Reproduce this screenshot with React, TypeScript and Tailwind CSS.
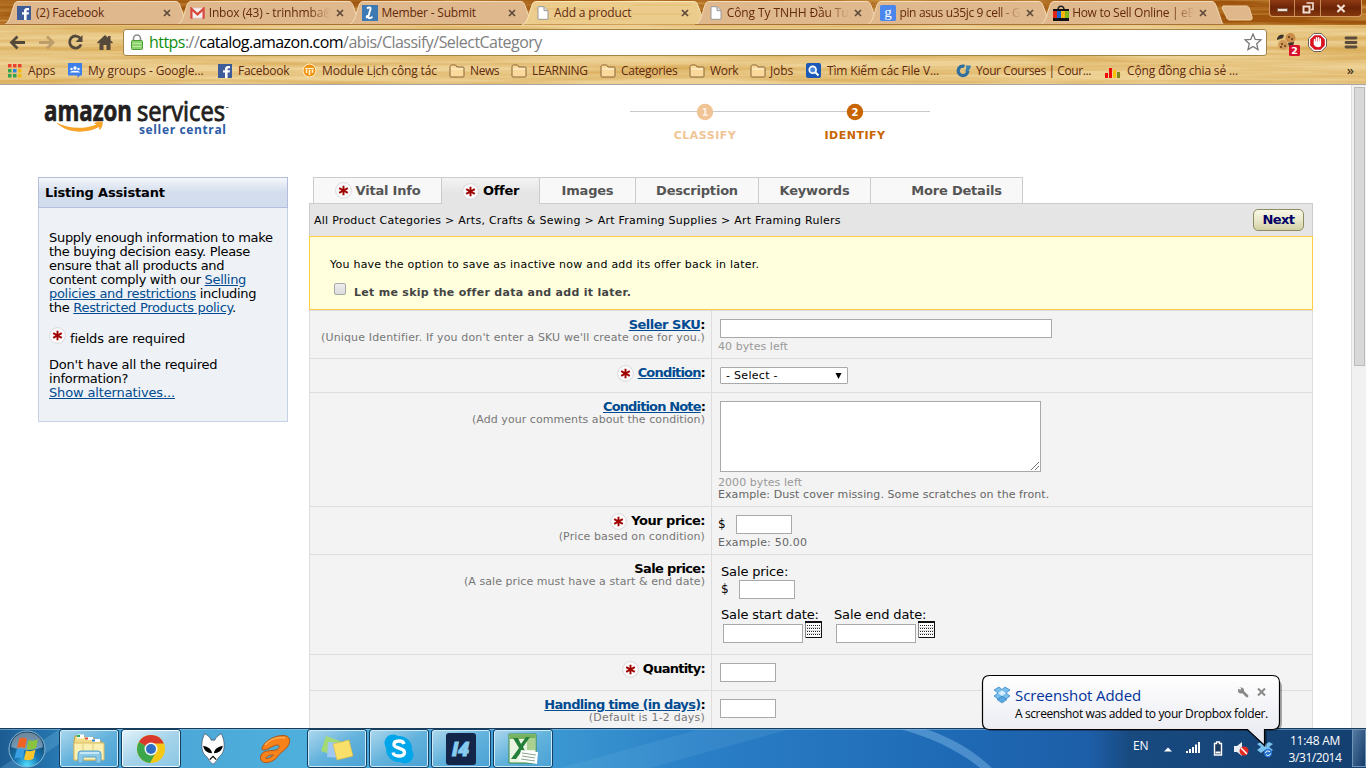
import type { ReactNode } from "react";

/* ---------- small shared pieces ---------- */

const UI = "font-['Open_Sans','Noto_Sans',sans-serif]";
const BODY = "font-['DejaVu_Sans',Verdana,sans-serif]";

function Star({ className = "" }: { className?: string }) {
  return (
    <svg viewBox="0 0 17 17" className={`h-[17px] w-[17px] shrink-0 ${className}`}>
      <circle cx="8.5" cy="8.5" r="7.9" fill="#fbfbfb" stroke="#d8d8d8" strokeWidth="1" />
      <path d="M8.5 3.700v9.600M4.200 6.100l8.600 4.800M12.800 6.100l-8.600 4.800" stroke="#a00000" strokeWidth="1.900" />
    </svg>
  );
}

function Wood({ id, className, freq, tone }: { id: string; className: string; freq: string; tone: string }) {
  return (
    <svg className={className} preserveAspectRatio="none">
      <filter id={id} x="0" y="0" width="100%" height="100%" colorInterpolationFilters="sRGB">
        <feTurbulence type="fractalNoise" baseFrequency={freq} numOctaves="4" seed="7" />
        <feColorMatrix values={tone} />
      </filter>
      <rect width="100%" height="100%" filter={`url(#${id})`} />
    </svg>
  );
}

/* ---------- browser ---------- */

const fb = (
  <svg viewBox="0 0 14 14" className="h-[14px] w-[14px]">
    <rect width="14" height="14" fill="#3f5c9a" />
    <path d="M7 14V8.600H5V6.300h2V5c0-2 1.200-3 3-3h2v2.300h-1.400c-.8 0-1 .4-1 1v1H12l-.3 2.300H9.600V14z" fill="#fff" />
  </svg>
);
const gmail = (
  <svg viewBox="0 0 16 12" className="h-[12px] w-[15px]">
    <rect x=".5" y=".5" width="15" height="11" rx="1" fill="#f4f1f0" stroke="#d9a9a0" strokeWidth=".6" />
    <path d="M1.500 12V1.500L8 7.500l6.500-6V12" fill="none" stroke="#d8483d" strokeWidth="2.400" />
  </svg>
);
const lIcon = (
  <svg viewBox="0 0 16 16" className="h-[16px] w-[16px]">
    <rect width="16" height="16" fill="#3d79b3" />
    <path d="M5 3.500C6.500 2 9 2 8.500 4L6.500 11c-.5 2.200 1 2.800 2.500 1.800l1.500-1M6.500 11C4.500 10.500 4 12 5.500 13" fill="none" stroke="#fff" strokeWidth="1.900" />
  </svg>
);
const page = (
  <svg viewBox="0 0 12 14" className="mx-[2px] h-[14px] w-[12px]">
    <path d="M1 .7h6l4 4v8.600H1z" fill="#fff" stroke="#999" />
    <path d="M7 .7v4h4" fill="#ddd" stroke="#999" />
  </svg>
);
const google = (
  <svg viewBox="0 0 16 16" className="h-[16px] w-[16px]">
    <rect width="16" height="16" rx="1.500" fill="#4a86ec" />
    <text x="8" y="11.500" textAnchor="middle" fill="#fff" fontSize="15" fontFamily="Liberation Serif, serif">g</text>
  </svg>
);
const ebay = (
  <svg viewBox="0 0 16 16" className="h-[16px] w-[16px]">
    <path d="M5 5c0-5 6-5 6 0" fill="none" stroke="#222" strokeWidth="1.500" />
    <path d="M0 4h16v3H0zM0 13h16v3H0z" fill="#111" />
    <path d="M0 6h4v7H0z" fill="#e02418" />
    <path d="M4 6h4v7H4z" fill="#1c62d0" />
    <path d="M8 6h4v7H8z" fill="#f5b50c" />
    <path d="M12 6h4v7h-4z" fill="#84b71b" />
  </svg>
);

const tabs: { icon: ReactNode; label: string; fade?: boolean; active?: boolean; track: string }[] = [
  { icon: fb, label: "(2) Facebook", track: "tracking-[-0.2px]" },
  { icon: gmail, label: "Inbox (43) - trinhmba@", fade: true, track: "tracking-[-0.15px]" },
  { icon: lIcon, label: "Member - Submit", track: "tracking-[-0.2px]" },
  { icon: page, label: "Add a product", active: true, track: "tracking-[-0.15px]" },
  { icon: page, label: "Công Ty TNHH Đầu Tư", fade: true, track: "tracking-[-0.1px]" },
  { icon: google, label: "pin asus u35jc 9 cell - G", fade: true, track: "tracking-[-0.35px]" },
  { icon: ebay, label: "How to Sell Online | eB", fade: true, track: "tracking-[-0.3px]" },
];

function TabStrip() {
  return (
    <div className="relative flex h-[25px] pl-[4px]">
      <Wood id="dark" className="absolute inset-0 h-[25px] w-full" freq="0.006 0.16" tone="0 0 0 0 0.62  0 0 0 0 0.33  0 0 0 0 0.05  2.2 0 0 0 -0.5" />
      {tabs.map((t) => (
        <div key={t.label} className="relative flex h-[25px] w-[172.700px] shrink-0 items-center pl-[13px]">
          <svg viewBox="0 0 184 25" className="absolute left-0 top-0 h-[25px] w-[184px]">
            <path
              d="M0 24.500C5 24 6.500 16 9.500 6.500C11 2 12 1.500 15 1.500H171C174 1.500 175 2.500 176.500 7L180.500 18C182 23 183 24.500 184 24.500"
              fill={t.active ? "#ebcc8c" : "#e0b88d"}
              stroke={t.active ? "#f9e9bd" : "#f4dcb8"}
            />
            {!t.active && <path d="M0 24.500H184" stroke="#a87136" />}
            {t.active && <path d="M12 9h70M60 14h110M20 19h90M110 5h60" stroke="#d5a64c" opacity=".25" strokeWidth="1.500" />}
          </svg>
          <div className="relative flex h-[22px] w-[19px] items-center">{t.icon}</div>
          <div
            className={`relative h-[18px] w-[122px] overflow-hidden whitespace-nowrap text-[12px] leading-[18px] text-[#632a0c] ${t.track} ${
              t.fade ? "[mask-image:linear-gradient(to_right,#000_82%,transparent)]" : ""
            }`}
          >
            {t.label}
          </div>
          <svg viewBox="0 0 8 8" className="relative ml-[5px] h-[8px] w-[8px]">
            <path d="M1 1l6 6M7 1L1 7" stroke="#5e4a3c" strokeWidth="1.700" />
          </svg>
        </div>
      ))}
      <svg viewBox="0 0 32 16" className="relative ml-[8px] mt-[5px] h-[16px] w-[32px]">
        <path d="M2 1h23c2 0 3 1 3.500 3l2.500 8c.5 2 0 3-2 3H9c-2 0-3-1-3.500-3L1 3z" fill="#dfb78a" stroke="#efd0a0" />
      </svg>
      <div className="absolute right-[4px] top-0 flex h-[17px] w-[93px] overflow-hidden rounded-b-[4px] border border-t-0 border-[#d79c61] bg-gradient-to-b from-[#8e3b14] via-[#6c2406] to-[#85380f]">
        <div className="flex w-[25px] items-center justify-center border-r border-[#c48a58]">
          <div className="mt-[4px] h-[4px] w-[11px] border border-[#7d5a44] bg-[#f2dfd2]" />
        </div>
        <div className="flex w-[26px] items-center justify-center border-r border-[#c48a58]">
          <svg viewBox="0 0 12 12" className="h-[12px] w-[12px]">
            <path d="M4.500 1h6.500v6.500H9" fill="none" stroke="#f2dfd2" strokeWidth="1.600" />
            <path d="M1.500 4.500h6v6h-6z" fill="none" stroke="#f2dfd2" strokeWidth="2" />
          </svg>
        </div>
        <div className="flex flex-1 items-center justify-center">
          <svg viewBox="0 0 10 10" className="h-[9px] w-[10px]">
            <path d="M1 1l8 8M9 1L1 9" stroke="#f2dfd2" strokeWidth="2.400" />
          </svg>
        </div>
      </div>
    </div>
  );
}

function Toolbar() {
  return (
    <div className="relative flex h-[34px] items-center">
      <svg viewBox="0 0 123 34" className="h-[34px] w-[123px] shrink-0">
        <g fill="none" strokeWidth="2.800">
          <path d="M25 17.500H12M17.500 11.500l-6 6 6 6" stroke="#55493c" />
          <path d="M39 17.500H52M47 11.500l6 6-6 6" stroke="#bd9d69" />
          <path d="M80.500 13.500a6 6 0 1 0 .6 6" stroke="#55493c" />
        </g>
        <path d="M82.500 10v7H75.500z" fill="#55493c" />
        <path d="M97 17.500l8-7.500 3 2.800V11h2.500v4.200l2.500 2.300-1 1-1.500-1v7.500h-4v-5h-3v5h-4v-7.500l-1.500 1z" fill="#55493c" />
      </svg>
      <div className="flex h-[27px] w-[1144px] shrink-0 items-center rounded-[3px] border border-[#a58246] bg-white pl-[7px]">
        <svg viewBox="0 0 12 16" className="h-[16px] w-[12px]">
          <path d="M2.500 7V4.500a3.500 3.500 0 0 1 7 0V7" fill="none" stroke="#8b8b8b" strokeWidth="1.600" />
          <rect x=".5" y="6.500" width="11" height="9" rx="1" fill="#8cd36d" stroke="#4a9a35" />
          <path d="M1.500 9.500h9M1.500 12.500h9" stroke="#b9eaa2" />
        </svg>
        <div className="ml-[6px] w-[1100px] whitespace-nowrap text-[16px] leading-[22px] tracking-[-0.54px] text-[#808080]">
          <span className="text-[#0f8f0f]">https</span>://<span className="text-black">catalog.amazon.com</span>/abis/Classify/SelectCategory
        </div>
        <svg viewBox="0 0 18 18" className="-ml-[5px] h-[18px] w-[18px] shrink-0">
          <path d="M9 1l2.300 5.400 5.700.5-4.300 3.900 1.300 5.800L9 13.500l-5 3.100 1.300-5.800L1 6.900l5.700-.5z" fill="#fff" stroke="#777" strokeWidth="1.300" />
        </svg>
      </div>
      <svg viewBox="0 0 99 34" className="h-[34px] w-[99px] shrink-0">
        <circle cx="23.500" cy="13" r="5" fill="#c98d49" />
        <circle cx="16" cy="20" r="5" fill="#d19a58" />
        <path d="M10 15c0-4 3-6 7-5l-1 3zM27 17c0 3-2 5-5 5l-1-4z" fill="#3d342c" />
        <g fill="#5d3514"><circle cx="22" cy="12" r="1" /><circle cx="25" cy="14" r="1" /><circle cx="15" cy="19" r="1" /><circle cx="18" cy="21" r="1" /><circle cx="14" cy="22" r="1" /></g>
        <rect x="22" y="20" width="11" height="11" rx="1.500" fill="#d8102d" />
        <text x="27.500" y="29" textAnchor="middle" fontSize="9.500" fontWeight="700" fill="#fff" fontFamily="DejaVu Sans, sans-serif">2</text>
        <path d="M46.800 8.500h7.400l5.300 5.300v7.400l-5.300 5.300h-7.400l-5.300-5.300v-7.400z" fill="#fff" stroke="#6d6055" />
        <path d="M47.500 10.300h6l4.300 4.200v6l-4.300 4.200h-6l-4.300-4.200v-6z" fill="#d9101d" />
        <path d="M47.500 18v-3.500M49.500 17.500V12.800M51.500 17.500V12.800M53.300 18v-4" stroke="#fff" strokeWidth="1.500" strokeLinecap="round" />
        <path d="M46.800 16.500h7.300v3.500c0 3-6 3-7.300-.5z" fill="#fff" />
        <path d="M79 13h10M79 17.500h10M79 22h10" stroke="#5a4c3d" strokeWidth="2.800" strokeLinecap="round" />
      </svg>
    </div>
  );
}

const folder = (
  <svg viewBox="0 0 16 14" className="h-[14px] w-[16px]">
    <path d="M1 3c0-1 .5-2 1.500-2h4l1.500 2h6c.7 0 1 .5 1 1v8c0 .7-.3 1-1 1H2c-.7 0-1-.3-1-1z" fill="#fbd99a" stroke="#87653a" />
    <path d="M2 5h12" stroke="#fff3d6" />
  </svg>
);
const bookmarks: { icon: ReactNode; label: string; w: string; gap: string; track: string }[] = [
  {
    icon: (
      <svg viewBox="0 0 14 14" className="h-[14px] w-[14px]">
        <path d="M0 0h3.500v3.500H0zM5 0h3.500v3.500H5zM10 0h3.500v3.500H10z" fill="#e8432f" />
        <path d="M0 5h3.500v3.500H0z" fill="#30a34f" /><path d="M5 5h3.500v3.500H5z" fill="#2c82e0" /><path d="M10 5h3.500v3.500H10z" fill="#f2b90d" />
        <path d="M0 10h3.500v3.500H0zM5 10h3.500v3.500H5z" fill="#30a34f" /><path d="M10 10h3.500v3.500H10z" fill="#f2b90d" />
      </svg>
    ),
    label: "Apps", w: "w-[60px]", gap: "w-[20px]", track: "tracking-[-0.2px]",
  },
  {
    icon: (
      <svg viewBox="0 0 14 15" className="h-[15px] w-[14px]">
        <path d="M0 0h14v12.500h-2L9.500 15V12.500H0z" fill="#3f7fe8" />
        <circle cx="7" cy="5" r="1.700" fill="#fff" /><circle cx="3.500" cy="6" r="1.200" fill="#fff" /><circle cx="10.500" cy="6" r="1.200" fill="#fff" />
        <path d="M2 9.500c0-2.500 10-2.500 10 0z" fill="#fff" />
      </svg>
    ),
    label: "My groups - Google...", w: "w-[150px]", gap: "w-[20px]", track: "tracking-[-0.12px]",
  },
  { icon: fb, label: "Facebook", w: "w-[84px]", gap: "w-[20px]", track: "tracking-[-0.27px]" },
  {
    icon: (
      <svg viewBox="0 0 15 15" className="h-[15px] w-[15px]">
        <circle cx="7.500" cy="7.500" r="6.500" fill="#f29112" stroke="#fff0c8" />
        <path d="M3 5.500h9" stroke="#fff2c9" strokeWidth="1.200" /><path d="M4.500 6.500V10M7.500 6.500V12M10.500 6.500V10" stroke="#fff2c9" strokeWidth="1.600" />
      </svg>
    ),
    label: "Module Lịch công tác", w: "w-[147px]", gap: "w-[20px]", track: "tracking-[-0.15px]",
  },
  { icon: folder, label: "News", w: "w-[62px]", gap: "w-[21px]", track: "tracking-[-0.4px]" },
  { icon: folder, label: "LEARNING", w: "w-[89px]", gap: "w-[21px]", track: "tracking-[-0.3px]" },
  { icon: folder, label: "Categories", w: "w-[89px]", gap: "w-[21px]", track: "tracking-[-0.3px]" },
  { icon: folder, label: "Work", w: "w-[61px]", gap: "w-[21px]", track: "tracking-[-0.3px]" },
  { icon: folder, label: "Jobs", w: "w-[56px]", gap: "w-[20px]", track: "tracking-[-0.1px]" },
  {
    icon: (
      <svg viewBox="0 0 15 15" className="h-[15px] w-[15px]">
        <rect width="15" height="15" rx="2" fill="#1c58b5" />
        <circle cx="6.700" cy="6.700" r="3.400" fill="#4b86d8" stroke="#fff" strokeWidth="1.700" /><path d="M9.500 9.500l3 3" stroke="#fff" strokeWidth="2" />
      </svg>
    ),
    label: "Tìm Kiếm các File V...", w: "w-[149px]", gap: "w-[21px]", track: "tracking-[-0.15px]",
  },
  {
    icon: (
      <svg viewBox="0 0 16 14" className="h-[14px] w-[16px]">
        <path d="M9.500 2.300A4.800 4.800 0 1 0 12.800 6.500" fill="none" stroke="#2e6f9e" strokeWidth="3.200" /><path d="M10.500 1.500h5.300c.3 3-2 6-6.300 6 1.500-1.500 2.500-3.500 1-6z" fill="#3c82b0" />
      </svg>
    ),
    label: "Your Courses | Cour...", w: "w-[150px]", gap: "w-[21px]", track: "tracking-[-0.4px]",
  },
  {
    icon: (
      <svg viewBox="0 0 15 14" className="h-[14px] w-[15px]">
        <path d="M0 9h3v5H0zM4 4h3v10H4z" fill="#f00b0b" /><path d="M8 6h3v8H8z" fill="#fbc009" /><path d="M12 8h3v6h-3z" fill="#7d8a17" />
      </svg>
    ),
    label: "Cộng đồng chia sẻ ...", w: "w-[150px]", gap: "w-[22px]", track: "tracking-[-0.16px]",
  },
];

function BookmarkBar() {
  return (
    <div className="relative flex h-[25px] items-center pb-[2px] pl-[8px] text-[12px] leading-[16px] text-[#5f2a0e]">
      {bookmarks.map((b) => (
        <div key={b.label} className={`flex shrink-0 items-center ${b.w}`}>
          <div className={`shrink-0 ${b.gap}`}>{b.icon}</div>
          <span className={`whitespace-nowrap ${b.track}`}>{b.label}</span>
        </div>
      ))}
      <span className="ml-auto mr-[12px] pb-[2px] text-[13px] font-semibold text-[#4a3524]">»</span>
    </div>
  );
}

function Browser() {
  return (
    <header className={`relative h-[85px] shrink-0 overflow-hidden border-b border-[#a5a5a5] bg-[#c98d3e] ${UI}`}>
      <div className="absolute inset-x-0 top-[25px] h-[60px] bg-[#edd195]" />
      <Wood id="grain" className="absolute inset-0 h-[85px] w-full" freq="0.004 0.15" tone="0 0 0 0 0.85  0 0 0 0 0.67  0 0 0 0 0.34  2.2 0 0 0 -0.8" />
      <TabStrip />
      <Toolbar />
      <BookmarkBar />
    </header>
  );
}

/* ---------- page ---------- */

function PageHeader() {
  return (
    <div className="flex h-[92px] pl-[40px]">
      <svg viewBox="0 0 200 60" className="h-[60px] w-[200px]">
        <g fontFamily="Open Sans, sans-serif" fill="#231f20" stroke="#231f20">
          <text x="4" y="35.500" fontSize="28" fontWeight="700" textLength="88" lengthAdjust="spacingAndGlyphs" strokeWidth=".7">amazon</text>
          <text x="97" y="35.500" fontSize="28" textLength="88" lengthAdjust="spacingAndGlyphs" strokeWidth=".9">services</text>
        </g>
        <path d="M186 22.500h2.500" stroke="#555" />
        <path d="M16 37.500c13 6.500 28 7 40.500 2L54 38.500c2.500-2.500 6-2.500 8.800-1.500 0 3.500-1 6-3.200 8.300l-.6-3.300C46 49 27 48.500 16 37.500z" fill="#f7a428" />
        <text x="99" y="49" fontFamily="Open Sans, sans-serif" fontSize="12" fontWeight="700" fill="#2d5ca6" textLength="87">seller central</text>
      </svg>
      <div className="ml-[390px] mt-[18px] flex w-[300px] flex-col">
        <svg viewBox="0 0 300 18" className="h-[18px] w-[300px]">
          <path d="M0 8.500h300" stroke="#c9c9c9" />
          <circle cx="75" cy="9" r="8.200" fill="#f1c496" />
          <circle cx="225" cy="9" r="8.200" fill="#c96500" />
          <g fontFamily="DejaVu Sans, sans-serif" fontSize="10" fontWeight="700" fill="#fff" textAnchor="middle">
            <text x="75" y="12.500" opacity=".75">1</text>
            <text x="225" y="12.500">2</text>
          </g>
        </svg>
        <div className="mt-[8px] flex text-center text-[11px] font-bold leading-[14px] tracking-[0.5px]">
          <span className="w-[150px] text-[#f1c496]">CLASSIFY</span>
          <span className="w-[150px] text-[#c96500]">IDENTIFY</span>
        </div>
      </div>
    </div>
  );
}

function Link({ children }: { children: ReactNode }) {
  return <a className="text-[#004b91] underline underline-offset-1">{children}</a>;
}

function Sidebar() {
  return (
    <aside className="h-[245px] w-[250px] shrink-0">
      <div className="h-[31px] border border-[#b4bddb] bg-gradient-to-b from-[#f5f7fa] via-[#d3dded] to-[#d1dcec] pl-[6px] text-[13px] font-bold leading-[29px] tracking-[-0.15px]">
        Listing Assistant
      </div>
      <div className="h-[214px] border border-t-0 border-[#c6d1e6] bg-[#eef2f7] pl-[10px] pt-[23px] text-[13px] leading-[14px] tracking-[-0.3px]">
        <p className="whitespace-nowrap">
          Supply enough information to make<br />the buying decision easy. Please<br />ensure that all products and<br />content comply with our <Link>Selling</Link><br />
          <Link>policies and restrictions</Link> including<br />the <Link>Restricted Products policy</Link>.
        </p>
        <p className="mt-[14px] flex h-[18px] items-center tracking-[-0.18px]"><Star className="-mt-[6px]" /><span className="ml-[4px] pt-[2px]">fields are required</span></p>
        <p className="mt-[11px] tracking-[-0.22px]">Don't have all the required<br />information?<br /><span className="tracking-[-0.14px]"><Link>Show alternatives...</Link></span></p>
      </div>
    </aside>
  );
}

const stepTabs = [
  { label: "Vital Info", w: "w-[129px]", star: true },
  { label: "Offer", w: "w-[97px]", star: true, active: true },
  { label: "Images", w: "w-[96px]" },
  { label: "Description", w: "w-[123px]" },
  { label: "Keywords", w: "w-[112px]" },
  { label: "More Details", w: "w-[153px]", pad: true },
];

function Box({ className }: { className: string }) {
  return <div className={`border border-[#a9a9a9] bg-white ${className}`} />;
}

function Calendar() {
  return (
    <svg viewBox="0 0 17 17" className="h-[17px] w-[17px]" shapeRendering="crispEdges">
      <rect x="0" y="0" width="17" height="17" fill="#888" />
      <rect x="1" y="1" width="15" height="15" fill="#fff" />
      <path d="M0 0h17v2H0zM16 0h1v17h-1zM1 16h16v1H1z" fill="#111" />
      <path d="M2 4.500h13M2 7.500h13M2 10.500h13M2 13.500h13" stroke="#222" strokeDasharray="1 1" />
      <path d="M1 6.500h15M1 9.500h15M1 12.500h15" stroke="#ddd" />
    </svg>
  );
}

function Row({
  h, label, track, link, star, note, noteCls = "tracking-[0.06px]", children,
}: { h: string; label: string; track: string; link?: boolean; star?: boolean; note?: string; noteCls?: string; children: ReactNode }) {
  return (
    <div className={`flex shrink-0 border-t border-[#ddd] ${h}`}>
      <div className="w-[401px] shrink-0 pr-[6px] pt-[7px] text-right">
        <div className={`flex h-[14px] items-center justify-end whitespace-nowrap text-[13px] font-bold leading-[14px] ${track}`}>
          {star && <Star className="mr-[4px]" />}
          {link ? <Link>{label}</Link> : label}:
        </div>
        {note && <div className={`whitespace-nowrap text-[11px] leading-[12px] text-[#777] ${noteCls}`}>{note}</div>}
      </div>
      <div className="flex-1 border-l border-[#ddd]">{children}</div>
    </div>
  );
}

function Form() {
  return (
    <main className="flex h-[551px] w-[1004px] shrink-0 flex-col">
      <div className="relative z-10 flex h-[26px] pl-[4px]">
        {stepTabs.map((t, i) => (
          <div
            key={t.label}
            className={`flex items-center justify-center border-t border-[#ccc] text-[13px] font-bold ${t.w} ${i === 0 || i > 1 ? "border-l" : ""} ${i === 5 ? "border-r" : ""} ${t.pad ? "pl-[20px]" : ""} ${
              t.active ? "mb-[-1px] bg-gradient-to-b from-[#f3f3f3] to-[#e5e5e5] to-60% text-black tracking-[-0.3px]" : "border-b-0 bg-[#f8f8f8] text-[#555] tracking-[-0.2px]"
            } ${i === 0 ? "border-r" : ""}`}
          >
            {t.star && <Star className="mr-[4px]" />}
            {t.label}
          </div>
        ))}
      </div>
      <div className="flex h-[33px] shrink-0 items-center border border-b-0 border-[#ccc] bg-[#e5e5e5] pl-[4px] text-[11px] tracking-[0.255px]">
        <span className="pt-[2px]">All Product Categories &gt; Arts, Crafts &amp; Sewing &gt; Art Framing Supplies &gt; Art Framing Rulers</span>
        <button className="ml-auto mr-[8px] h-[22px] w-[51px] rounded-[5px] border border-[#8f8c62] bg-gradient-to-b from-[#f8f8e8] via-[#e9e8c9] to-[#d2d0a5] text-[13px] font-bold leading-[18px] tracking-[-0.6px] text-[#000066]">Next</button>
      </div>
      <div className="h-[74px] shrink-0 border border-[#ffcc4a] bg-[#ffffdd] pl-[20px] pt-[21px] text-[11px]">
        <div className="leading-[14px] tracking-[0.24px]">You have the option to save as inactive now and add its offer back in later.</div>
        <div className="mt-[11px] flex items-center pl-[4px] font-bold leading-[18px] tracking-[0.29px] text-[#444]">
          <span className="mb-[7px] mr-[8px] h-[12px] w-[12px] rounded-[2px] border border-[#a8a8a8] bg-gradient-to-b from-[#ededed] to-[#dcdcdc]" />
          <span className="pt-[1px]">Let me skip the offer data and add it later.</span>
        </div>
      </div>
      <div className="flex flex-1 flex-col overflow-hidden border-x border-[#ddd] bg-[#f3f3f3]">
        <Row h="h-[48px]" label="Seller SKU" track="tracking-[-0.5px]" link note="(Unique Identifier. If you don't enter a SKU we'll create one for you.)" noteCls="tracking-[0.142px]">
          <Box className="ml-[8px] mt-[8px] h-[19px] w-[332px]" />
          <div className="ml-[6px] mt-[3px] text-[11px] leading-[12px] tracking-[0.06px] text-[#999]">40 bytes left</div>
        </Row>
        <Row h="h-[34px]" label="Condition" track="tracking-[-0.82px]" link star>
          <div className="ml-[8px] mt-[8px] flex h-[17px] w-[128px] items-center justify-between rounded-[1px] border border-[#a9a9a9] bg-white pl-[5px] pr-[5px] text-[11px] tracking-[0.3px]">
            <span className="pt-[2px]">- Select -</span>
            <svg viewBox="0 0 7 6" className="h-[6px] w-[7px]"><path d="M.5 0h6L3.500 6z" /></svg>
          </div>
        </Row>
        <Row h="h-[114px]" label="Condition Note" track="tracking-[-0.86px]" link note="(Add your comments about the condition)">
          <div className="ml-[8px] mt-[8px] flex h-[71px] w-[321px] items-end justify-end border border-[#a9a9a9] bg-white">
            <svg viewBox="0 0 10 10" className="h-[10px] w-[10px]"><path d="M1 9l8-8M5 9l4-4" stroke="#777" /></svg>
          </div>
          <div className="ml-[6px] mt-[5px] text-[11px] leading-[12px] tracking-[0.06px] text-[#999]">2000 bytes left</div>
          <div className="ml-[6px] text-[11px] leading-[12px] tracking-[0.08px] text-[#666]">Example: Dust cover missing. Some scratches on the front.</div>
        </Row>
        <Row h="h-[48px]" label="Your price" track="tracking-[-0.5px]" star note="(Price based on condition)" noteCls="mt-[3px] tracking-[0.1px]">
          <div className="ml-[6px] mt-[8px] flex items-center text-[12px]">
            <span className="w-[18px] leading-[19px]">$</span>
            <Box className="h-[19px] w-[56px]" />
          </div>
          <div className="ml-[6px] mt-[3px] text-[11px] leading-[12px] tracking-[0.2px] text-[#666]">Example: 50.00</div>
        </Row>
        <Row h="h-[100px]" label="Sale price" track="tracking-[-0.65px]" note="(A sale price must have a start & end date)">
          <div className="ml-[9px] pt-[9px] text-[13px] leading-[15px] tracking-[-0.14px]">
            <div>Sale price:</div>
            <div className="mt-[1px] flex items-center">
              <span className="w-[18px] text-[12px] leading-[19px]">$</span>
              <Box className="h-[19px] w-[56px]" />
            </div>
            <div className="mt-[8px] flex">
              <div className="w-[113px]">
                <div className="h-[14px] whitespace-nowrap">Sale start date:</div>
                <div className="flex gap-[2px] pl-[2px]"><Box className="mt-[3px] h-[19px] w-[80px]" /><Calendar /></div>
              </div>
              <div className="w-[113px]">
                <div className="h-[14px] whitespace-nowrap">Sale end date:</div>
                <div className="flex gap-[2px] pl-[2px]"><Box className="mt-[3px] h-[19px] w-[80px]" /><Calendar /></div>
              </div>
            </div>
          </div>
        </Row>
        <Row h="h-[36px]" label="Quantity" track="tracking-[-0.75px]" star>
          <Box className="ml-[8px] mt-[8px] h-[19px] w-[56px]" />
        </Row>
        <Row h="h-[60px]" label="Handling time (in days)" track="tracking-[-0.68px]" link note="(Default is 1-2 days)" noteCls="tracking-[0.2px]">
          <Box className="ml-[8px] mt-[8px] h-[19px] w-[56px]" />
        </Row>
      </div>
    </main>
  );
}

/* ---------- taskbar ---------- */

const btn = "border-[#cdeaf8] bg-gradient-to-br from-[#a9d6ec] via-[#62b2dc] to-[#4ba2d4] outline outline-1 outline-[#123f63]";
const tasks: { id: string; cls: string; icon: ReactNode }[] = [
  {
    id: "explorer", cls: btn,
    icon: (
      <svg viewBox="0 0 34 32" className="h-[32px] w-[34px]">
        <path d="M3 3h9l2 2h8l2 3h5v19H2V9z" fill="#f3dc86" stroke="#c3a14a" />
        <path d="M5 1.500h7v4H5z" fill="#fff" /><path d="M5 2h3v2H5z" fill="#22b14c" /><path d="M13 4h8v3h-8z" fill="#fff" /><path d="M13 4.500h3v2h-3z" fill="#df4b35" /><path d="M20 6h8v3h-8z" fill="#fff" /><path d="M20 6.500h3v2h-3z" fill="#2b80cf" />
        <path d="M2 10h30v17H2z" fill="#fbf0b3" stroke="#d9bd66" /><path d="M11 10v8M21 10v8" stroke="#e3cc7c" />
        <path d="M6 30v-9q0-3 3-3h17q3 0 3 3v9h-5v-6H11v6z" fill="#8cc9e6" stroke="#5ba4cc" /><path d="M8 20h19" stroke="#d8f1fb" strokeWidth="1.500" />
      </svg>
    ),
  },
  {
    id: "chrome", cls: "border-[#f2fbff] bg-gradient-to-br from-[#e2f3fa] via-[#a5d3ea] to-[#8cc8e5] outline outline-1 outline-[#123f63]",
    icon: (
      <svg viewBox="0 0 30 30" className="h-[30px] w-[30px]">
        <circle cx="15" cy="15" r="14" fill="#f4c915" />
        <path d="M15 15L2.900 8A14 14 0 0 1 27.800 9.500H15z" fill="#d93a2b" />
        <path d="M15 15L2.900 8A14 14 0 0 0 14 29l6-11z" fill="#3ca64a" />
        <circle cx="15" cy="15" r="6.500" fill="#f5f5f5" /><circle cx="15" cy="15" r="5" fill="#2c6fc4" />
      </svg>
    ),
  },
  {
    id: "fox", cls: "border-transparent",
    icon: (
      <svg viewBox="0 0 28 34" className="h-[33px] w-[26px]">
        <path d="M5 1c4 2 6 4 7 7h4c1-3 3-5 7-7 3 6 4 14 2 19-1 4-4 5-6 8-1 3-3 4-5 6-2-2-4-3-5-6-2-3-5-4-6-8C1 15 2 7 5 1z" fill="#fff" stroke="#445" strokeWidth=".7" />
        <path d="M3.500 14c5 1 9 3.500 9.500 8-5 0-9-3-9.500-8zM24.500 14c-5 1-9 3.500-9.500 8 5 0 9-3 9.500-8z" fill="#000" />
        <path d="M10.500 29l3.500-3.500 3.500 3.500" fill="none" stroke="#000" strokeWidth="1.400" />
      </svg>
    ),
  },
  {
    id: "player", cls: "border-transparent",
    icon: (
      <svg viewBox="0 0 30 30" className="h-[30px] w-[30px]">
        <path
          d="M2 14C5 6 16 1 24 1.500C30 2 31 7 28 12C25 17 20 18 18 22C15 27 7 30 3 28C-1 26 0 20 4 18C8 16 14 17 17 15.500C20 14 20 10.500 17 11C13 11.500 10 14.500 6 15.500C3 16.500 1.500 16 2 14ZM6 24.500C9 24.500 12 23 13.500 21C10 21 6 22 6 24.500Z"
          fill="#f7811a" fillRule="evenodd" stroke="#a9520f" strokeWidth=".9"
        />
        <path d="M5 11C10 5 18 3 25 4" fill="none" stroke="#ffb35c" strokeWidth="1.300" />
      </svg>
    ),
  },
  {
    id: "notes", cls: btn,
    icon: (
      <svg viewBox="0 0 34 28" className="h-[28px] w-[34px]">
        <path d="M6 1l14 5-5 15L1 16z" fill="#a3d977" /><path d="M8 7l14 1-1 15-14-1z" fill="#9fc9f4" />
        <path d="M13 9l16-4 4 16-16 4z" fill="#f8e06a" stroke="#d8b73c" strokeWidth=".6" />
      </svg>
    ),
  },
  {
    id: "skype", cls: btn,
    icon: (
      <svg viewBox="0 0 32 32" className="h-[32px] w-[32px]">
        <circle cx="10" cy="10" r="8.500" fill="#00a6ea" /><circle cx="22" cy="22" r="8.500" fill="#00a6ea" /><circle cx="16" cy="16" r="13" fill="#00a6ea" />
        <path d="M21 11c-1-4-10-4-10 .5s10.500 3 10.500 8-10.500 4.500-11.500 0" fill="none" stroke="#fff" strokeWidth="3.400" />
      </svg>
    ),
  },
  {
    id: "i4", cls: btn,
    icon: (
      <svg viewBox="0 0 30 32" className="h-[32px] w-[30px]">
        <rect width="30" height="32" rx="3" fill="#13264a" />
        <text x="14.500" y="23" textAnchor="middle" fontFamily="Open Sans, sans-serif" fontSize="19" fontStyle="italic" fontWeight="800" fill="#86ccf0" stroke="#86ccf0" strokeWidth=".8">I4</text>
      </svg>
    ),
  },
  {
    id: "excel", cls: btn,
    icon: (
      <svg viewBox="0 0 32 32" className="h-[32px] w-[32px]">
        <path d="M2 1h27v29H2z" fill="#e9f4e2" stroke="#3b8a3a" /><path d="M2.500 1.500h26V6h-26z" fill="#76b35c" /><path d="M20 5h8v12h-8z" fill="#a9d08e" />
        <path d="M6 5h5l3 6 5-7h4l-7 10 6 12h-5l-3-7-5 7H4l8-11z" fill="#23803a" />
        <path d="M14 17l17 2-1 12-18-3z" fill="#fff" /><path d="M15 20l14 2M15 23l13 2M14 26l14 2" stroke="#8ba58b" />
      </svg>
    ),
  },
];

function Taskbar() {
  return (
    <footer className={`relative flex h-[40px] shrink-0 border-t border-[#1a3b5a] bg-[linear-gradient(90deg,#1c5c93_0px,#2674ad_50px,#4aa5d6_130px,#4fafdc_300px,#3f9dd4_520px,#2a7fc6_700px,#1f6ab5_950px,#1d5ea8_1090px,#184a80_1130px,#143f70_1366px)] ${UI}`}>
      <svg viewBox="0 0 1366 39" className="absolute inset-0 h-[39px] w-[1366px]">
        <path d="M0 .5h1366" stroke="#8cc5e8" opacity=".55" />
        <path d="M0 39L60 0h20L25 39z" fill="#7cc4e8" opacity=".25" />
        <path d="M900 0c30 8 60 22 80 39h12C970 18 945 6 925 0z" fill="#83bdea" opacity=".45" />
        <path d="M560 39L700 0h90L650 39z" fill="#8fd0f0" opacity=".12" />
      </svg>
      <div className="relative flex w-[60px] items-center pl-[8px]">
        <svg viewBox="0 0 38 38" className="h-[38px] w-[38px]">
          <defs>
            <radialGradient id="orb" cx=".5" cy=".95" r=".85"><stop offset="0" stopColor="#4fe0ff" /><stop offset=".4" stopColor="#1878b4" /><stop offset="1" stopColor="#154063" /></radialGradient>
          </defs>
          <circle cx="19" cy="19" r="18" fill="url(#orb)" stroke="#8cb9d4" />
          <path d="M3 17C4 6 12 2.500 19 2.500S34 6 35 17c-9 4-22 4-32 0z" fill="#fff" opacity=".38" />
          <path d="M11 9c3-2 6-1 8 0l-2 9c-3-1-5-1-8 0z" fill="#ef6325" /><path d="M20.500 10c3 1 6 1 9.500-1l-2 9c-3 2-6 2-9.500 1z" fill="#8ac43f" />
          <path d="M8.500 20c3-2 5-1 8 0l-2 9c-3-1-5-2-8 0z" fill="#3aa0e4" /><path d="M18 20.500c3 1 6 1 9.500-1l-2 9c-3 2-6 2-9.500 1z" fill="#fbc62d" />
        </svg>
      </div>
      <div className="relative flex gap-[4px] pb-[1px] pt-[1px]">
        {tasks.map((t) => (
          <div key={t.id} className={`flex h-[37px] w-[58px] items-center justify-center rounded-[2px] border ${t.cls}`}>{t.icon}</div>
        ))}
      </div>
      <div className="relative ml-[581px] flex w-[145px] items-center text-[12px] tracking-[-0.2px] text-white">
        <span className="w-[16px] pb-[5px]">EN</span>
        <svg viewBox="0 0 129 39" className="h-[39px] w-[129px]">
          <path d="M15 22.500h8l-4-4z" fill="#fff" />
          <path d="M37 22h2v2h-2zM40 20h2v4h-2zM43 18h2v6h-2zM46 15.500h2v8.500h-2zM49 13h2v11h-2z" fill="#fff" />
          <path d="M65.500 14.500h2v-1.500h3v1.500h2v11.500h-7z" fill="#1b3a5e" stroke="#fff" strokeWidth="1.400" /><path d="M66.500 22.500h5v2h-5z" fill="#fff" />
          <path d="M85 17h3l5-4v14l-5-4h-3z" fill="#e9eef3" /><circle cx="95" cy="22" r="4.500" fill="#e22a22" /><path d="M92 19l6 6" stroke="#fff" strokeWidth="1.500" />
          <path d="M108 15l4-2 4 2.500 4-2.500 4 2-4 3 4 3-4 3-4-3-4 3-4-3 4-3z" fill="#79c2ef" />
          <circle cx="119" cy="24" r="4.200" fill="#2674d5" /><path d="M116.500 24a2.500 2.500 0 0 1 4.500-1M121.500 24.500a2.500 2.500 0 0 1-4.500 1" fill="none" stroke="#fff" />
        </svg>
      </div>
      <div className="relative ml-[8px] flex w-[58px] flex-col items-center pt-[3px] text-[12px] leading-[17px] text-white">
        <span className="whitespace-nowrap tracking-[-0.25px]">11:48 AM</span>
        <span className="whitespace-nowrap tracking-[-0.45px]">3/31/2014</span>
      </div>
      <div className="absolute right-0 top-0 h-[38px] w-[14px] border border-[#6f94b8] bg-gradient-to-br from-[#557ba3] to-[#123c68]" />
    </footer>
  );
}

function Balloon() {
  return (
    <div className={`absolute left-[980px] top-[673px] h-[78px] w-[306px] ${UI}`}>
      <svg viewBox="0 0 306 78" className="absolute inset-0 h-[78px] w-[306px]">
        <defs><linearGradient id="bal" x1="0" y1="0" x2="0" y2="1"><stop offset="0" stopColor="#fff" /><stop offset="1" stopColor="#e6e7f0" /></linearGradient></defs>
        <path d="M12 5H292q10 2 10 8v38q0 7-8 7h-7v16L268 58H12q-7 0-7-7z" fill="#000" opacity=".3" />
        <path d="M9.500 2.500H292.500Q299.500 2.500 299.500 9.500V49.500Q299.500 56.500 292.500 56.500H284.500V72.500L267.500 56.500H9.500Q2.500 56.500 2.500 49.500V9.500Q2.500 2.500 9.500 2.500z" fill="url(#bal)" stroke="#000" strokeWidth="1.200" />
        <path d="M14 17l5-3 3 2.500 3-2.500 5 3-4 3 4 3-4 3-4-3-4 3-4-3 4-3z" fill="#79bdea" stroke="#2c7fc5" strokeWidth=".7" />
        <path d="M18 20l4-2.500 4 2.500-4 3z" fill="#d7effc" /><path d="M17 26.500l5-3 5 3-5 3.500z" fill="#5aa6df" stroke="#2c7fc5" strokeWidth=".6" />
        <path d="M262 18l5 5" stroke="#888" strokeWidth="2.800" strokeLinecap="round" /><circle cx="261" cy="17.500" r="3" fill="#888" /><path d="M256.500 14.500l4.500 1.500" stroke="#f8f8fb" strokeWidth="1.600" />
        <path d="M278 15.500l7 7M285 15.500l-7 7" stroke="#888" strokeWidth="2" />
      </svg>
      <div className="relative pl-[35px] pt-[12px]">
        <div className="whitespace-nowrap text-[15px] leading-[20px] tracking-[-0.1px] text-[#003399]">Screenshot Added</div>
        <div className="whitespace-nowrap text-[12px] leading-[17px] tracking-[-0.39px] text-black">A screenshot was added to your Dropbox folder.</div>
      </div>
    </div>
  );
}

export default function App() {
  return (
    <div className={`relative flex h-[768px] w-[1366px] flex-col overflow-hidden bg-white text-black ${BODY}`}>
      <Browser />
      <div className="flex h-[643px] shrink-0 overflow-hidden">
        <div className="w-[1351px] shrink-0">
          <PageHeader />
          <div className="flex gap-[21px] pl-[38px]">
            <Sidebar />
            <Form />
          </div>
        </div>
        <div className="flex w-[15px] justify-center border-l border-[#dedede] bg-[#f1f1f1] pt-[2px]">
          <div className="h-[279px] w-[11px] border border-[#bbb] bg-[#d8d8d8]" />
        </div>
      </div>
      <Taskbar />
      <Balloon />
    </div>
  );
}
